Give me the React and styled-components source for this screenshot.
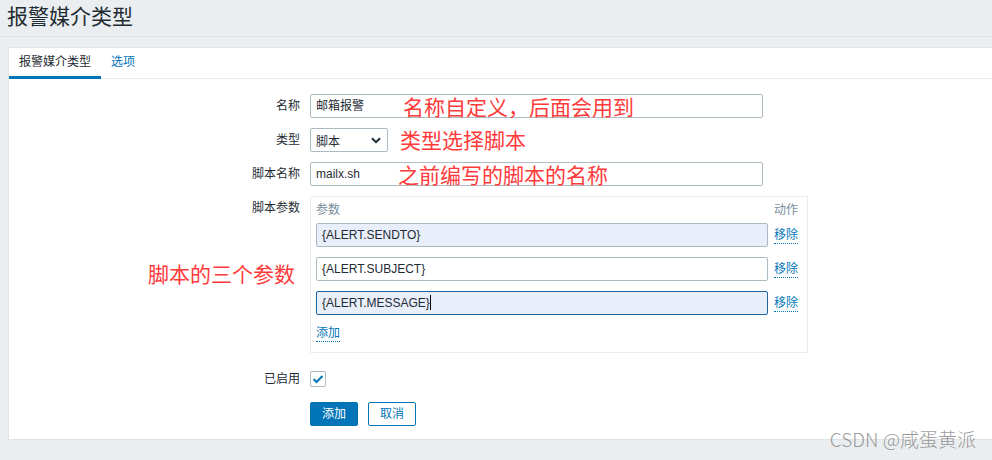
import React from 'react';
import styled, { createGlobalStyle } from 'styled-components';

const GlobalStyle = createGlobalStyle`
  html, body {
    margin: 0;
    padding: 0;
    background: #ebeef0;
  }
  body {
    font-family: "Liberation Sans", Arial, "Noto Sans CJK SC", sans-serif;
    font-size: 12px;
    color: #1f2c33;
  }
`;

const Page = styled.div`
  position: relative;
  width: 992px;
  height: 460px;
  overflow: hidden;
`;

const Header = styled.div`
  height: 37px;
  border-bottom: 1px solid #dde2e5;
  padding-left: 7px;
  box-sizing: border-box;
`;

const Title = styled.h1`
  margin: 0;
  padding-top: 4px;
  font-size: 21px;
  font-weight: 400;
  line-height: 26px;
  color: #1f2c33;
`;

const Panel = styled.div`
  margin: 10px 0 0 8px;
  height: 393px;
  box-sizing: border-box;
  background: #fff;
  border: 1px solid #dfe4e7;
  border-right: none;
`;

const TabBar = styled.div`
  display: flex;
  height: 30px;
  border-bottom: 1px solid #ebeef0;
`;

const Tab = styled.div`
  padding: 0 10px;
  height: 28px;
  line-height: 28px;
  margin-bottom: -1px;
  color: ${({ active }) => (active ? '#1f2c33' : '#0275b8')};
  border-bottom: 3px solid ${({ active }) => (active ? '#0275b8' : 'transparent')};
`;

const Form = styled.div`
  display: grid;
  grid-template-columns: 291px 1fr;
  column-gap: 10px;
  row-gap: 10px;
  padding-top: 15px;
  align-items: center;
`;

const Label = styled.div`
  position: relative;
  text-align: right;
  line-height: 24px;
  align-self: ${({ top }) => (top ? 'start' : 'center')};
  margin-top: ${({ push }) => push || 0}px;
`;

const Field = styled.div`
  position: relative;
  display: flex;
  align-items: center;
  min-height: 24px;
  margin-top: ${({ push }) => push || 0}px;
`;

const TextInput = styled.div`
  box-sizing: border-box;
  width: ${({ w }) => w || 453}px;
  height: 24px;
  padding: 0 5px;
  line-height: 22px;
  border: 1px solid ${({ focus }) => (focus ? '#1c64a3' : '#acbbc2')};
  border-radius: 2px;
  background: ${({ filled }) => (filled ? '#e8effb' : '#fff')};
  color: #1f2c33;
  white-space: nowrap;
`;

const Caret = styled.span`
  display: inline-block;
  width: 1px;
  height: 15px;
  background: #000;
  vertical-align: -3px;
`;

const Select = styled.div`
  box-sizing: border-box;
  width: 78px;
  height: 24px;
  padding: 0 6px 0 5px;
  border: 1px solid #acbbc2;
  border-radius: 2px;
  display: flex;
  align-items: center;
  justify-content: space-between;
`;

const Note = styled.div`
  position: absolute;
  left: ${({ x }) => x}px;
  top: ${({ y }) => y}px;
  font-size: 21px;
  line-height: 24px;
  color: #ff3a3a;
  white-space: nowrap;
  text-align: left;
  font-family: "Noto Sans CJK SC", sans-serif;
  font-weight: 400;
`;

const ParamBox = styled.div`
  box-sizing: border-box;
  width: 498px;
  padding: 5px 9px 10px 5px;
  border: 1px solid #ebeef0;
  display: grid;
  grid-template-columns: 1fr auto;
  column-gap: 6px;
  row-gap: 10px;
  align-items: center;
`;

const ColHead = styled.div`
  color: #768d99;
  line-height: 16px;
  margin-bottom: -5px;
`;

const LinkText = styled.span`
  color: #0275b8;
  line-height: 16px;
  border-bottom: 1px dotted #0275b8;
  justify-self: start;
`;

const Check = styled.div`
  box-sizing: border-box;
  width: 16px;
  height: 16px;
  border: 1px solid #acbbc2;
  border-radius: 2px;
  display: flex;
  align-items: center;
  justify-content: center;
`;

const Buttons = styled.div`
  display: flex;
  gap: 10px;
`;

const Button = styled.div`
  box-sizing: border-box;
  width: 48px;
  height: 24px;
  line-height: 22px;
  text-align: center;
  border-radius: 2px;
  border: 1px solid #0275b8;
  background: ${({ primary }) => (primary ? '#0275b8' : '#fff')};
  color: ${({ primary }) => (primary ? '#fff' : '#0275b8')};
`;

const Watermark = styled.div`
  position: absolute;
  right: 16px;
  bottom: 8px;
  font-size: 19px;
  color: rgba(120, 120, 120, 0.75);
  font-family: "Noto Sans CJK SC", sans-serif;
  font-weight: 300;
`;

const params = [
  { value: '{ALERT.SENDTO}', filled: true },
  { value: '{ALERT.SUBJECT}' },
  { value: '{ALERT.MESSAGE}', filled: true, focus: true },
];

const App = () => {
  return <Page>
    <GlobalStyle/>
    <Header>
      <Title>报警媒介类型</Title>
    </Header>
    <Panel>
      <TabBar>
        <Tab active>报警媒介类型</Tab>
        <Tab>选项</Tab>
      </TabBar>
      <Form>
        <Label>名称</Label>
        <Field>
          <TextInput>邮箱报警</TextInput>
          <Note x={93} y={0}>名称自定义，后面会用到</Note>
        </Field>

        <Label>类型</Label>
        <Field>
          <Select>
            <span>脚本</span>
            <svg width="10" height="7" viewBox="0 0 10 7">
              <path d="M1 1.3 L5 5.2 L9 1.3" fill="none" stroke="#1f2c33" strokeWidth="2"/>
            </svg>
          </Select>
          <Note x={90} y={-1}>类型选择脚本</Note>
        </Field>

        <Label>脚本名称</Label>
        <Field>
          <TextInput>mailx.sh</TextInput>
          <Note x={88} y={0}>之前编写的脚本的名称</Note>
        </Field>

        <Label top>
          脚本参数
          <Note x={139} y={65}>脚本的三个参数</Note>
        </Label>
        <Field>
          <ParamBox>
            <ColHead>参数</ColHead>
            <ColHead>动作</ColHead>
            {params.map((p) => (
              <React.Fragment key={p.value}>
                <TextInput w={452} filled={p.filled} focus={p.focus}>
                  {p.value}{p.focus && <Caret/>}
                </TextInput>
                <LinkText>移除</LinkText>
              </React.Fragment>
            ))}
            <LinkText>添加</LinkText>
          </ParamBox>
        </Field>

        <Label push={4}>已启用</Label>
        <Field push={4}>
          <Check>
            <svg width="12" height="10" viewBox="0 0 12 10">
              <path d="M1.5 5 L4.5 8 L10.5 2" fill="none" stroke="#0275b8" strokeWidth="2"/>
            </svg>
          </Check>
        </Field>

        <div/>
        <Field push={1}>
          <Buttons>
            <Button primary>添加</Button>
            <Button>取消</Button>
          </Buttons>
        </Field>
      </Form>
    </Panel>
    <Watermark>CSDN @咸蛋黄派</Watermark>
  </Page>;
};

export default App;
